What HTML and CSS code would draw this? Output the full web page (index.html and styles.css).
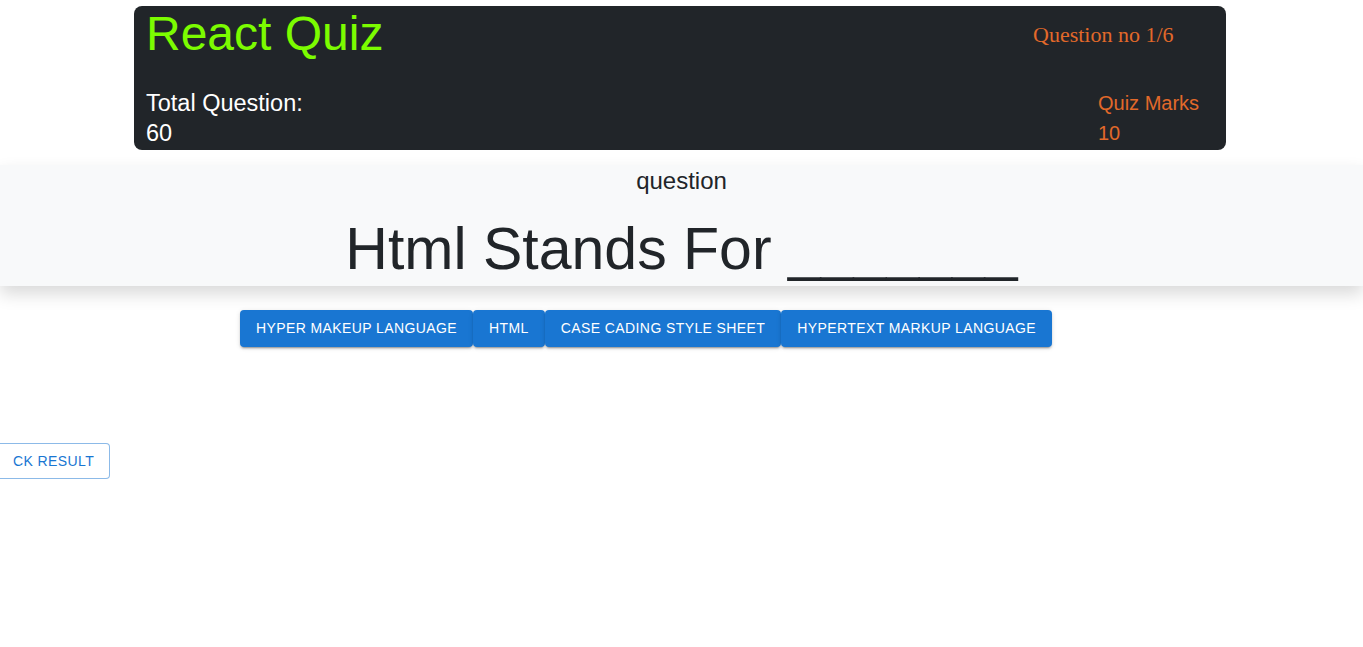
FILE: index.html
```html
<!DOCTYPE html>
<html>
<head>
<meta charset="utf-8">
<link rel="stylesheet" href="styles.css">
</head>
<body>
<header class="quiz-header">
  <div class="header-row top-row">
    <h1 class="title">React Quiz</h1>
    <div class="qno">Question no 1/6</div>
  </div>
  <div class="header-row bottom-row">
    <div class="stat total">
      <div>Total Question:</div>
      <div>60</div>
    </div>
    <div class="stat marks">
      <div>Quiz Marks</div>
      <div>10</div>
    </div>
  </div>
</header>

<section class="question-box">
  <div class="q-label">question</div>
  <div class="q-text">Html Stands For _______</div>
</section>

<div class="options">
  <button class="btn-contained">Hyper Makeup Language</button>
  <button class="btn-contained">Html</button>
  <button class="btn-contained">Case Cading Style Sheet</button>
  <button class="btn-contained">Hypertext Markup Language</button>
</div>

<div class="result-row">
  <button class="btn-outlined">ck Result</button>
</div>
</body>
</html>
```

FILE: styles.css
```css
* { box-sizing: border-box; }
html, body { margin: 0; padding: 0; background: #fff; overflow: hidden; }
body { font-family: "Liberation Sans", Arial, sans-serif; color: #212529; }

.quiz-header {
  width: 1092px;
  height: 144px;
  margin: 6px 0 0 134px;
  background: #212529;
  border-radius: 8px;
  padding: 2px 0 0 12px;
  display: flex;
  flex-direction: column;
  justify-content: space-between;
}
.header-row { display: flex; justify-content: space-between; align-items: flex-start; }
.title {
  margin: 0;
  font-weight: 400;
  font-size: 48px;
  line-height: 52px;
  color: #7cfc00;
}
.qno {
  font-family: "Liberation Serif", Georgia, serif;
  font-size: 22px;
  line-height: 25px;
  color: #e2692a;
  margin-top: 14px;
  width: 193px;
}
.bottom-row { padding-bottom: 2px; }
.stat {
  line-height: 30px;
  color: #fff;
}
.stat.total { font-size: 23.5px; }
.stat.marks { font-size: 20px; color: #e2692a; width: 128px; }

.question-box {
  margin-top: 15px;
  height: 121px;
  background: #f8f9fa;
  box-shadow: 0 8px 16px rgba(0,0,0,0.15);
  text-align: center;
  padding-top: 2px;
}
.q-label { font-size: 24px; line-height: 28px; }
.q-text { font-size: 59px; line-height: 68px; margin-top: 20px; }

.options {
  display: flex;
  gap: 0;
  margin: 24px 0 0 240px;
}
.btn-contained {
  font-family: "Liberation Sans", Arial, sans-serif;
  font-weight: 400;
  font-size: 14px;
  line-height: 24.5px;
  letter-spacing: 0.4px;
  text-transform: uppercase;
  color: #fff;
  background: #1976d2;
  border: 0;
  border-radius: 4px;
  padding: 6px 16px;
  box-shadow: 0 3px 1px -2px rgba(0,0,0,.2), 0 2px 2px 0 rgba(0,0,0,.14), 0 1px 5px 0 rgba(0,0,0,.12);
}

.result-row { margin-top: 96px; }
.btn-outlined {
  font-family: "Liberation Sans", Arial, sans-serif;
  font-weight: 400;
  font-size: 14px;
  line-height: 24.5px;
  letter-spacing: 0.4px;
  text-transform: uppercase;
  color: #1976d2;
  background: #fff;
  border: 1px solid rgba(25,118,210,0.5);
  border-radius: 4px;
  padding: 5px 15px 5px 32px;
  margin-left: -20px;
}
```
